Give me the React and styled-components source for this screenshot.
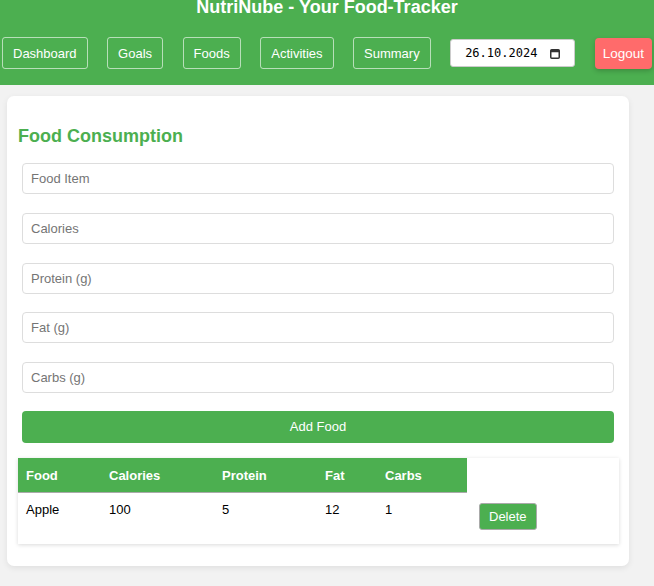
import styled, { createGlobalStyle } from "styled-components";

const GlobalStyle = createGlobalStyle`
  body {
    margin: 0;
    background: #f2f2f2;
    font-family: "Liberation Sans", Arial, sans-serif;
  }
`;

const Header = styled.header`
  background: #4caf50;
  height: 85px;
  overflow: hidden;
`;

const Title = styled.h1`
  margin: -3px 0 0;
  font-size: 18px;
  line-height: 20px;
  font-weight: 700;
  color: #fff;
  text-align: center;
`;

const Nav = styled.nav`
  display: flex;
  align-items: center;
  gap: 19.5px;
  padding: 20px 2px 0;
`;

const NavButton = styled.button`
  height: 32px;
  padding: 0 10px;
  background: transparent;
  color: #fff;
  border: 1px solid rgba(255, 255, 255, 0.6);
  border-radius: 3px;
  font-family: inherit;
  font-size: 13px;
`;

const DateBox = styled.div`
  display: flex;
  align-items: center;
  justify-content: space-between;
  width: 127px;
  height: 28px;
  box-sizing: border-box;
  padding: 0 14px;
  background: #fff;
  border: 1px solid #ccc;
  border-radius: 3px;
  font-family: "DejaVu Sans Mono", "Liberation Mono", monospace;
  font-size: 12px;
  color: #000;
`;

const LogoutButton = styled.button`
  height: 31px;
  padding: 0 8px;
  background: #ff6b6b;
  color: #fff;
  border: none;
  border-radius: 4px;
  box-shadow: 0 2px 5px rgba(0, 0, 0, 0.2);
  font-family: inherit;
  font-size: 13.5px;
`;

const Main = styled.main`
  padding: 11px 25px 20px 7px;
`;

const Card = styled.section`
  background: #fff;
  border-radius: 7px;
  box-shadow: 0 2px 6px rgba(0, 0, 0, 0.08);
  padding: 28px 10px 22px 11px;
`;

const Heading = styled.h2`
  margin: 0 0 15px;
  font-size: 18px;
  line-height: 24px;
  color: #4caf50;
`;

const Form = styled.div`
  display: flex;
  flex-direction: column;
  padding: 0 5px 0 4px;
`;

const Input = styled.input`
  height: 31px;
  box-sizing: border-box;
  margin-bottom: 18.75px;
  padding: 0 8px;
  border: 1px solid #ddd;
  border-radius: 4px;
  font-family: inherit;
  font-size: 13px;
  color: #333;
  &::placeholder {
    color: #757575;
  }
`;

const AddButton = styled.button`
  height: 32px;
  margin-top: -1px;
  background: #4caf50;
  color: #fff;
  border: none;
  border-radius: 4px;
  font-family: inherit;
  font-size: 13px;
`;

const Table = styled.table`
  width: 601px;
  margin-top: 15px;
  border-collapse: collapse;
  background: #fff;
  box-shadow: 0 1px 4px rgba(0, 0, 0, 0.15);
  font-size: 13px;
`;

const Th = styled.th`
  width: ${(p) => p.$w}px;
  height: 35px;
  padding: 0 8px;
  box-sizing: border-box;
  background: #4caf50;
  color: #fff;
  text-align: left;
  font-weight: 700;
  border-bottom: 1px solid #aaa;
`;

const Td = styled.td`
  height: 51px;
  padding: 9px 8px 0;
  box-sizing: border-box;
  vertical-align: top;
  color: #000;
`;

const ActionTd = styled.td`
  padding: 10px 12px 0;
  vertical-align: top;
`;

const DeleteButton = styled.button`
  height: 27px;
  padding: 0 9px;
  background: #4caf50;
  color: #fff;
  border: 1px solid #aaa;
  border-radius: 3px;
  font-family: inherit;
  font-size: 13px;
`;

function CalendarIcon() {
  return (
    <svg width="10" height="11" viewBox="0 0 10 11">
      <rect x="0.75" y="1.75" width="8.5" height="8.5" rx="1" fill="none" stroke="#333" strokeWidth="1.5" />
      <rect x="0.75" y="1.75" width="8.5" height="2.5" fill="#333" />
    </svg>
  );
}

const navItems = ["Dashboard", "Goals", "Foods", "Activities", "Summary"];
const fields = ["Food Item", "Calories", "Protein (g)", "Fat (g)", "Carbs (g)"];
const foods = [{ name: "Apple", calories: 100, protein: 5, fat: 12, carbs: 1 }];

export default function App() {
  return (
    <>
      <GlobalStyle />
      <Header>
        <Title>NutriNube - Your Food-Tracker</Title>
        <Nav>
          {navItems.map((item) => (
            <NavButton key={item}>{item}</NavButton>
          ))}
          <DateBox>
            <span>26.10.2024</span>
            <CalendarIcon />
          </DateBox>
          <LogoutButton>Logout</LogoutButton>
        </Nav>
      </Header>
      <Main>
        <Card>
          <Heading>Food Consumption</Heading>
          <Form>
            {fields.map((f) => (
              <Input key={f} placeholder={f} />
            ))}
            <AddButton>Add Food</AddButton>
          </Form>
          <Table>
            <thead>
              <tr>
                <Th $w={83}>Food</Th>
                <Th $w={113}>Calories</Th>
                <Th $w={103}>Protein</Th>
                <Th $w={60}>Fat</Th>
                <Th $w={90}>Carbs</Th>
              </tr>
            </thead>
            <tbody>
              {foods.map((f) => (
                <tr key={f.name}>
                  <Td>{f.name}</Td>
                  <Td>{f.calories}</Td>
                  <Td>{f.protein}</Td>
                  <Td>{f.fat}</Td>
                  <Td>{f.carbs}</Td>
                  <ActionTd>
                    <DeleteButton>Delete</DeleteButton>
                  </ActionTd>
                </tr>
              ))}
            </tbody>
          </Table>
        </Card>
      </Main>
    </>
  );
}
